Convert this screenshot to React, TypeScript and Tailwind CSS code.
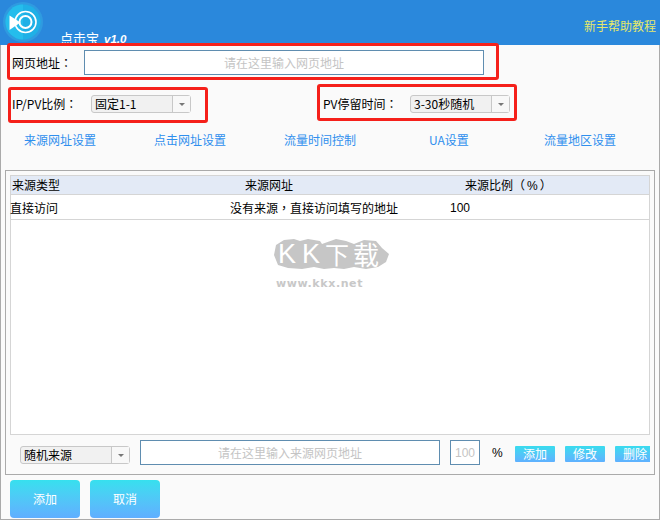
import React from 'react';

const FONT = "font-['Noto_Sans_CJK_SC','Liberation_Sans',sans-serif]";

function Logo() {
    return (
        <svg width="42" height="42" viewBox="0 0 42 42" className="shrink-0">
            <circle cx="21" cy="21" r="20" fill="#2f9be0" />
            <circle cx="21" cy="21" r="17.5" fill="#1fb0e6" />
            <path d="M21 3.5 A17.5 17.5 0 0 0 21 38.5 Z" fill="#25bdec" />
            <circle cx="23.5" cy="21" r="10.5" fill="none" stroke="#ffffff" strokeWidth="1.6" />
            <circle cx="23.5" cy="21" r="6" fill="none" stroke="#ffffff" strokeWidth="2" />
            <path d="M7.5 14.5 L18.5 21.5 L7.5 29 Z" fill="#ffffff" />
        </svg>
    );
}

// the reference centres its full width colon in the cell, the TC face does too
function Colon() {
    return <span className="font-['Noto_Sans_CJK_TC',sans-serif]">：</span>;
}

function Select({ value, className }: { value: string; className: string }) {
    return (
        <div className={`flex h-[18px] shrink-0 items-stretch rounded-[3px] border border-[#c8c8c8] bg-[#f1f1f1] text-[12px] leading-[16px] text-black ${className}`}>
            <span className="flex-1 overflow-hidden whitespace-nowrap pl-[3px]">{value}</span>
            <span className="flex w-[18px] items-center justify-center border-l border-[#c8c8c8] bg-[#f8f8f8]">
                <span className="h-0 w-0 border-x-[3px] border-t-[3px] border-x-transparent border-t-[#777777]" />
            </span>
        </div>
    );
}

function SmallButton({ children }: { children: React.ReactNode }) {
    return (
        <button className="h-4 w-10 shrink-0 rounded-[1px] bg-gradient-to-b from-[#38dcee] to-[#5fb0ff] text-[12px] leading-4 text-white">
            {children}
        </button>
    );
}

function BigButton({ children }: { children: React.ReactNode }) {
    return (
        <button className="h-[38px] w-[70px] rounded-[4px] bg-gradient-to-b from-[#36e0ee] to-[#60aeff] text-[12px] text-white">
            {children}
        </button>
    );
}

function Watermark() {
    return (
        <div className="pointer-events-none absolute left-[274px] top-[238px] flex w-[118px] flex-col items-start">
            <div className="relative h-[32px] w-[116px]">
                <svg width="116" height="32" viewBox="0 0 116 32" className="absolute inset-0">
                    <path d="M2 7 L10 2 L20 1 L26 3 L34 1 L46 3 L48 6 L62 1 L72 3 L80 6 L90 2 L102 3 L108 10 L115 16 L112 24 L104 29 L92 31 L80 29 L70 31 L60 30 L50 31 L40 29 L28 31 L14 30 L4 27 L0 17 Z" fill="#c6c6c6" />
                </svg>
                <div className="absolute inset-0 flex items-center text-[24px] font-normal leading-[32px] text-white">
                    <span className="ml-[4px] w-[24px] font-['Liberation_Sans',sans-serif] text-[27px]">K</span>
                    <span className="w-[23px] font-['Liberation_Sans',sans-serif] text-[27px]">K</span>
                    <span className="w-[28px]">下</span>
                    <span className="text-[26px]">载</span>
                </div>
            </div>
            <div className="ml-[2px] mt-[8px] whitespace-nowrap font-['DejaVu_Sans',sans-serif] text-[11px] font-bold leading-[12px] tracking-[0.6px] text-[#c8c8c8]">www.kkx.net</div>
        </div>
    );
}

export default function App() {
    return (
        <div className={`relative flex h-[520px] w-[660px] flex-col overflow-hidden bg-[#fafafa] text-[12px] text-black ${FONT}`}>
            <header className="flex h-[45px] shrink-0 justify-between overflow-hidden bg-[#2a88dc] pl-[2px] pr-[4px] pt-[1px]">
                <div className="flex">
                    <Logo />
                    <div className="ml-[16px] mt-[28px] flex h-[18px] items-baseline whitespace-nowrap text-[13px] leading-[18px] text-white">
                        <span>点击宝</span>
                        <span className="ml-[5px] font-['Liberation_Sans',sans-serif] text-[11.5px] font-bold italic">v1.0</span>
                    </div>
                </div>
                <a className="mt-[16px] text-[12px] leading-[18px] text-[#e6e86a]">新手帮助教程</a>
            </header>

            <main className="flex min-h-0 flex-1 flex-col border-x border-b border-[#aaaaaa]">
                <div className="flex h-[30px] shrink-0 items-center pl-[11px] pt-[5px]">
                    <span className="w-[72px] leading-4">网页地址<Colon /></span>
                    <input
                        className="h-[25px] w-[400px] border border-[#5f8db0] bg-white text-center text-[12px] outline-none placeholder:text-[#c4c4c4]"
                        placeholder="请在这里输入网页地址"
                    />
                </div>

                <div className="mt-[20px] flex h-[18px] shrink-0 items-center pl-[11px]">
                    <span className="w-[79px] whitespace-nowrap">IP/PV比例<Colon /></span>
                    <Select value="固定1-1" className="w-[100px]" />
                    <span className="ml-[132px] w-[87px] whitespace-nowrap">PV停留时间<Colon /></span>
                    <Select value="3-30秒随机" className="w-[100px]" />
                </div>

                <nav className="mt-[18px] flex h-[18px] shrink-0 pl-[23px] text-[12px] leading-[18px] text-[#2f8fee]">
                    <a className="w-[130px]">来源网址设置</a>
                    <a className="w-[130px]">点击网址设置</a>
                    <a className="w-[145px]">流量时间控制</a>
                    <a className="w-[115px]">UA设置</a>
                    <a>流量地区设置</a>
                </nav>

                <section className="mx-[4px] mt-[21px] flex h-[305px] shrink-0 flex-col border border-[#aaaaaa] px-[4px] pt-[4px]">
                    <div className="flex min-h-0 flex-1 flex-col border border-[#d5d5d5] bg-white">
                        <div className="flex h-[19px] shrink-0 items-center border-b border-[#d5d5d5] bg-[#e3eaf6] leading-[18px]">
                            <span className="ml-[1px] w-[233px]">来源类型</span>
                            <span className="w-[220px]">来源网址</span>
                            <span className="whitespace-nowrap">来源比例<span className="font-['Noto_Sans_CJK_TC',sans-serif]">（</span><span className="px-[2px] font-['Liberation_Sans',sans-serif]">%</span>）</span>
                        </div>
                        <div className="flex h-[25px] shrink-0 items-center border-b border-[#d5d5d5] pt-[1px] leading-[18px]">
                            <span className="ml-[-1px] w-[220px]">直接访问</span>
                            <span className="w-[220px] whitespace-nowrap">没有来源<span className="font-['Noto_Sans_CJK_TC',sans-serif]">，</span>直接访问填写的地址</span>
                            <span className="font-['Liberation_Sans',sans-serif]">100</span>
                        </div>
                    </div>
                    <div className="flex h-[39px] shrink-0 items-start overflow-hidden pl-[10px]">
                        <Select value="随机来源" className="mt-[11px] w-[110px]" />
                        <input
                            className="ml-[10px] mt-[5px] h-[25px] w-[300px] shrink-0 border border-[#5f8db0] bg-white text-center text-[12px] outline-none placeholder:text-[#c4c4c4]"
                            placeholder="请在这里输入来源网页地址"
                        />
                        <input
                            className="ml-[10px] mt-[5px] h-[25px] w-[30px] shrink-0 border border-[#5f8db0] bg-white text-center font-['Liberation_Sans',sans-serif] text-[12px] outline-none placeholder:text-[#c4c4c4]"
                            placeholder="100"
                        />
                        <span className="ml-[12px] mt-[6px] w-[23px] shrink-0 font-['Liberation_Sans',sans-serif] text-[12px] leading-[25px]">%</span>
                        <div className="mt-[11px] flex shrink-0 gap-[10px]">
                            <SmallButton>添加</SmallButton>
                            <SmallButton>修改</SmallButton>
                            <SmallButton>删除</SmallButton>
                        </div>
                    </div>
                </section>

                <div className="ml-[9px] mt-[5px] flex gap-[10px]">
                    <BigButton>添加</BigButton>
                    <BigButton>取消</BigButton>
                </div>
            </main>

            <Watermark />

            {/* red annotation boxes drawn over the screenshot */}
            <div className="pointer-events-none absolute left-[7px] top-[43px] h-[37px] w-[492px] rounded-[3px] border-[3px] border-[#f5201a]" />
            <div className="pointer-events-none absolute left-[8px] top-[87px] h-[36px] w-[200px] rounded-[3px] border-[3px] border-[#f5201a]" />
            <div className="pointer-events-none absolute left-[317px] top-[84px] h-[37px] w-[200px] rounded-[3px] border-[3px] border-[#f5201a]" />
        </div>
    );
}
